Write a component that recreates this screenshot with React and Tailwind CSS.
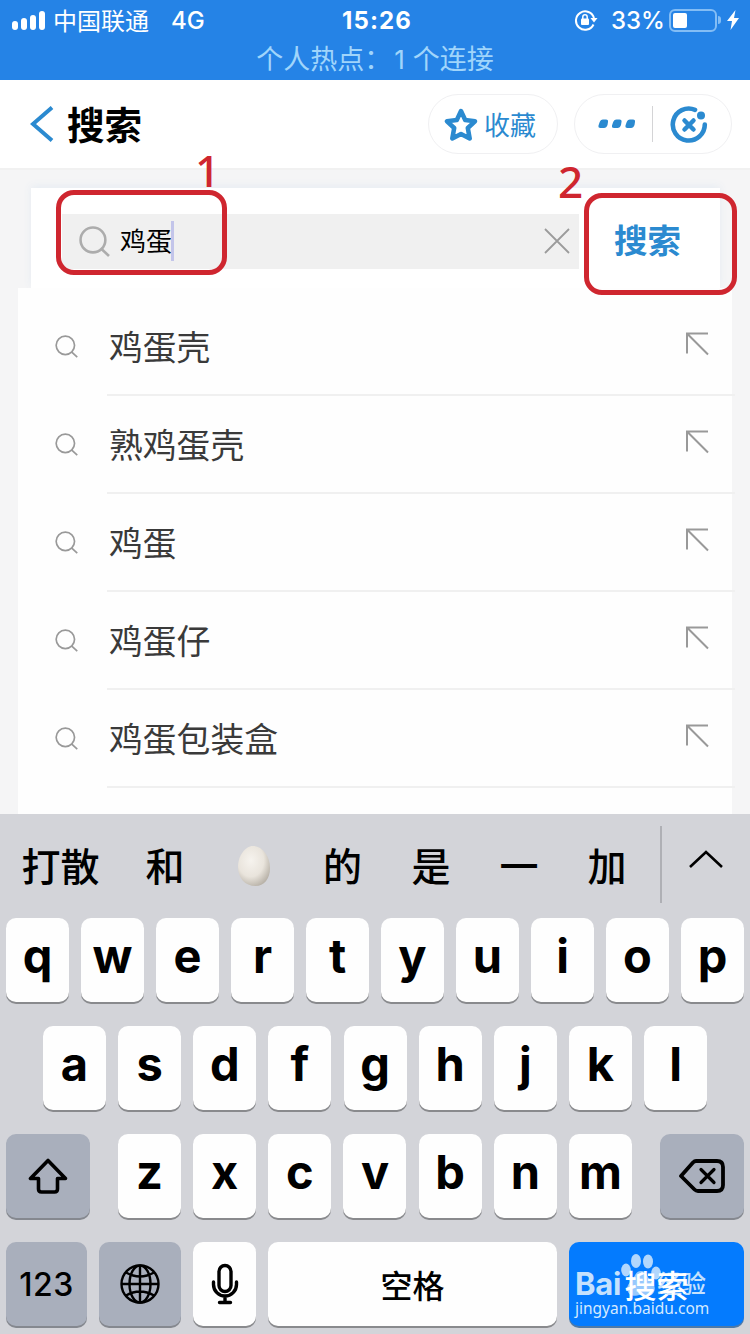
import clsx from 'clsx'

const suggestions = ['鸡蛋壳', '熟鸡蛋壳', '鸡蛋', '鸡蛋仔', '鸡蛋包装盒']
const topRow = ['q', 'w', 'e', 'r', 't', 'y', 'u', 'i', 'o', 'p']
const middleRow = ['a', 's', 'd', 'f', 'g', 'h', 'j', 'k', 'l']
const bottomRow = ['z', 'x', 'c', 'v', 'b', 'n', 'm']

function SearchIcon({ className, strokeWidth }) {
  return (
    <svg viewBox="0 0 30 30" className={className} fill="none" stroke="currentColor" strokeWidth={strokeWidth}>
      <circle cx="13.500" cy="13.500" r="12" />
      <path d="M21.500 22 29 29" />
    </svg>
  )
}

function EggIcon() {
  return (
    <svg viewBox="0 0 34 42" className="w-[34px] h-[42px]">
      <defs>
        <radialGradient id="egg" cx="0.4" cy="0.36" r="0.68">
          <stop offset="0" stopColor="#f6f3ee" />
          <stop offset="0.6" stopColor="#e9e4dc" />
          <stop offset="1" stopColor="#b9b3a9" />
        </radialGradient>
      </defs>
      <path d="M16 1C25 1 33 11 33 23 33 34 27 41 18.500 41 8 41 1 33 1 22 1 11 8 1 16 1z" fill="url(#egg)" />
    </svg>
  )
}

function Key({ children, className, tone = 'light' }) {
  return (
    <div
      className={clsx(
        'h-[84px] rounded-[10px] flex items-center justify-center shrink-0 text-black',
        tone === 'light' && 'bg-[#fefefe] shadow-[0_2px_0_#898a8d]',
        tone === 'dark' && 'bg-[#a9afbc] shadow-[0_2px_0_#85888f]',
        tone === 'blue' && 'bg-[#047bfe] shadow-[0_2px_0_#4d79a8]',
        className
      )}
    >
      {children}
    </div>
  )
}

function LetterKey({ letter }) {
  return (
    <Key className="w-[63px]">
      <span className="font-['Inter',sans-serif] font-bold text-[47px] leading-[60px] mb-[9px]">{letter}</span>
    </Key>
  )
}

function StatusBar() {
  return (
    <header className="h-20 bg-[#2583e6] text-white">
      <div className="h-10 pl-3 pr-2 flex items-center">
        <div className="flex items-end gap-[3px] h-5 w-[33px] shrink-0">
          <i className="w-1.5 h-[9px] rounded-sm bg-white" />
          <i className="w-1.5 h-3 rounded-sm bg-white" />
          <i className="w-1.5 h-[15px] rounded-sm bg-white" />
          <i className="w-1.5 h-[19px] rounded-sm bg-white" />
        </div>
        <span className="ml-2 w-[118px] text-[24px] leading-10">中国联通</span>
        <span className="w-[171px] font-['Inter',sans-serif] text-[24px] font-medium mt-0.5">4G</span>
        <span className="font-['Inter',sans-serif] text-[24px] font-bold w-[232px] tracking-[1.1px] mt-0.5">15:26</span>
        <svg viewBox="0 0 24 22" className="w-6 h-[22px] shrink-0" fill="none" stroke="currentColor" strokeWidth="2">
          <path d="M19.500 15.500A9.200 9.200 0 1 1 20 9" />
          <path d="M16.500 9h7l-3.500 4.500z" fill="currentColor" stroke="none" />
          <rect x="7" y="9.500" width="8" height="6.500" rx="1" fill="currentColor" stroke="none" />
          <path d="M8.800 10V8a2.200 2.200 0 0 1 4.400 0v2" strokeWidth="1.500" />
        </svg>
        <span className="ml-[13px] w-[58px] shrink-0 font-['Inter',sans-serif] text-[24px] font-medium mt-0.5">33%</span>
        <div className="w-12 h-[23px] border-2 border-[#83bdf5] rounded-[6px] p-0.5 shrink-0">
          <div className="w-[14px] h-[15px] bg-white rounded-xs" />
        </div>
        <div className="w-[3px] h-2 ml-px rounded-r-sm bg-[#83bdf5] shrink-0" />
        <svg viewBox="0 0 12 20" className="w-3 h-5 ml-[6px] shrink-0" fill="currentColor">
          <path d="M8.500 0 0 11h5L3.500 20 12 8H7z" />
        </svg>
      </div>
      <p className="h-10 text-center text-[27px] leading-[36px] text-[#a0d5fb]">
        <span>个人热点：</span>
        <span className="font-['Inter',sans-serif] text-[26px] ml-[3px] mr-[2px]">1</span> 个连接
      </p>
    </header>
  )
}

function NavBar() {
  return (
    <nav className="h-[90px] bg-white border-b-2 border-[#f1f1f1] flex items-center pl-[30px] pr-[18px] text-[#2b8ad0]">
      <svg viewBox="0 0 24 36" className="w-6 h-9" fill="none" stroke="currentColor" strokeWidth="4">
        <path d="M22 1.500 3 18l19 16.500" />
      </svg>
      <h1 className="ml-[13px] mb-[3px] text-[37.500px] leading-[50px] font-bold text-black">搜索</h1>
      <button className="ml-auto w-[130px] h-[60px] rounded-full border border-[#f0f0f2] flex items-center pl-[15px]">
        <svg viewBox="0 0 34 34" className="w-[34px] h-[34px] mt-[2px]" fill="none" stroke="currentColor" strokeWidth="4.500" strokeLinejoin="round">
          <path d="m17 3 4.200 9 9.800 1.300-7.200 6.700 1.900 10.500L17 26 8.300 30.500l1.900-10.500L3 13.300l9.800-1.300z" />
        </svg>
        <span className="ml-[6px] text-[26px] leading-8">收藏</span>
      </button>
      <div className="ml-4 w-[158px] h-[60px] rounded-full border border-[#f0f0f2] flex items-center">
        <svg viewBox="0 0 38 10" className="ml-[23px] w-[38px] h-[10px]" fill="currentColor">
          <path d="M5 .500h3q2.500 0 2 2.500L9.500 6Q8.500 9 6 9H2.500Q0 9 .500 6.500L1.500 3.500Q2.500.500 5 .500zM18.500 .500h3q2.500 0 2 2.500L23 6q-1 3-3.500 3H16q-2.500 0-2-2.500l1-3q1-3 3.500-3zM32 .500h3q2.500 0 2 2.500l-.500 3q-1 3-3.500 3h-3.500q-2.500 0-2-2.500l1-3q1-3 3.500-3z" />
        </svg>
        <div className="ml-[16px] w-px h-9 bg-[#d4d4d6]" />
        <svg viewBox="0 0 38 38" className="ml-[17px] w-[38px] h-[38px] mt-[2px]" fill="none" stroke="currentColor">
          <path d="M25 3.800A16 16 0 1 0 34.800 18.500" strokeWidth="4.600" strokeLinecap="round" />
          <circle cx="31" cy="9.500" r="4" fill="currentColor" stroke="none" />
          <path d="m14.500 14.500 9 9M23.500 14.500l-9 9" strokeWidth="4.500" strokeLinecap="round" />
        </svg>
      </div>
    </nav>
  )
}

function SearchBar() {
  return (
    <div className="ml-[31px] w-[689px] h-[100px] bg-white shadow-[0_-2px_8px_#e6ecf2] pl-[31px] pt-[26px] flex items-start">
      <div className="w-[517px] h-[55px] bg-[#f0f0f0] flex items-center pl-[17px] pr-[9px]">
        <SearchIcon className="w-[31px] h-[31px] text-[#acacac]" strokeWidth="2.500" />
        <span className="ml-[10px] mb-[3px] text-[26px] leading-10 text-black">鸡蛋</span>
        <i className="-ml-px mb-[2px] w-[3px] h-10 bg-[#c3c5ea]" />
        <svg viewBox="0 0 26 26" className="ml-auto mb-px w-[26px] h-[26px] text-[#9b9b9b]" fill="none" stroke="currentColor" strokeWidth="1.800">
          <path d="m1 1 24 24M25 1 1 25" />
        </svg>
      </div>
      <button className="ml-[35px] -mt-[2px] text-[33.500px] leading-[54px] font-bold text-[#2b8ad0]">搜索</button>
    </div>
  )
}

function Suggestion({ text }) {
  return (
    <li className="h-[98px] shrink-0 flex items-center pl-[37px]">
      <SearchIcon className="w-[23px] h-[23px] shrink-0 text-[#999] mb-[2px]" strokeWidth="2.200" />
      <div className="ml-[29px] w-[628px] h-[98px] border-b-2 border-[#f0f0f0] flex items-center justify-between pr-[26px] shrink-0">
        <span className="ml-[2px] text-[33.800px] leading-[50px] text-[#3a3a3a]">{text}</span>
        <svg viewBox="0 0 24 24" className="w-6 h-6 mb-[4px] text-[#999]" fill="none" stroke="currentColor" strokeWidth="2">
          <path d="M23 1.500H2v20M2 1.500l21 21" />
        </svg>
      </div>
    </li>
  )
}

function Candidates() {
  return (
    <div className="h-[104px] flex items-center text-[39px] leading-[56px] font-medium text-black">
      <span className="mb-[5px] w-[121px] text-center">打散</span>
      <span className="mb-[5px] w-[88px] text-center">和</span>
      <span className="w-[89px] flex justify-center"><EggIcon /></span>
      <span className="mb-[5px] w-[89px] text-center">的</span>
      <span className="mb-[5px] w-[88px] text-center">是</span>
      <span className="mb-[5px] w-[88px] text-center">一</span>
      <span className="mb-[5px] w-[88px] text-center">加</span>
      <div className="ml-[9px] w-0.5 h-[77px] mb-[4px] bg-[#afb0b5]" />
      <svg viewBox="0 0 34 18" className="ml-[27px] mb-[14px] w-[34px] h-[18px]" fill="none" stroke="currentColor" strokeWidth="2.600">
        <path d="M1 17 17 2l16 15" />
      </svg>
    </div>
  )
}

function Watermark() {
  return (
    <div className="absolute left-[6px] top-[10px] w-[140px] text-[#c5e1fd]">
      <div className="flex items-center h-[47px] pt-[16px]">
        <span className="font-['Inter',sans-serif] text-[31px] font-bold leading-[34px] tracking-[-0.3px]">Bai</span>
        <span className="ml-[36px] text-[25px] leading-[34px] tracking-[-1px] font-medium mb-[3px]">经验</span>
      </div>
      <div className="font-['Noto_Sans',sans-serif] text-[15.500px] leading-5 -mt-px text-[#d5eaff]">jingyan.baidu.com</div>
      <svg viewBox="0 0 40 44" className="absolute left-[46px] top-[1px] w-10 h-11 opacity-90" fill="currentColor">
        <ellipse cx="5" cy="17" rx="4.800" ry="6.500" />
        <ellipse cx="15" cy="8" rx="5" ry="7" />
        <ellipse cx="27" cy="8.500" rx="5" ry="7" />
        <ellipse cx="35" cy="20" rx="4.800" ry="6.500" />
        <path d="M20 18c5 0 6 5 9 9 4 4 6 7 4 12-3 6-8 3-13 3s-10 3-13-3c-2-5 0-8 4-12 3-4 4-9 9-9z" opacity="0.850" />
      </svg>
    </div>
  )
}

function Keyboard() {
  return (
    <section className="h-[520px] bg-[#d3d4d9]">
      <Candidates />
      <div className="flex flex-col gap-6 px-1.5">
        <div className="flex justify-between">
          {topRow.map(letter => <LetterKey key={letter} letter={letter} />)}
        </div>
        <div className="flex justify-between px-[37px]">
          {middleRow.map(letter => <LetterKey key={letter} letter={letter} />)}
        </div>
        <div className="flex justify-between">
          <Key tone="dark" className="w-[84px]">
            <svg viewBox="0 0 40 36" className="w-10 h-9" fill="none" stroke="currentColor" strokeWidth="3.600" strokeLinejoin="round">
              <path d="M20 2.500 2.500 20.500h8V31q0 3 3 3h13q3 0 3-3V20.500h8z" />
            </svg>
          </Key>
          <div className="flex justify-between w-[514px]">
            {bottomRow.map(letter => <LetterKey key={letter} letter={letter} />)}
          </div>
          <Key tone="dark" className="w-[84px]">
            <svg viewBox="0 0 46 36" className="w-[46px] h-9" fill="none" stroke="currentColor" strokeWidth="3.800" strokeLinecap="round" strokeLinejoin="round">
              <path d="M17 3h21q6 0 6 6v18q0 6-6 6H19q-2 0-3.500-1.500L2 18 14 4.500Q15.500 3 17 3z" />
              <path d="m22 11.500 13 13M35 11.500l-13 13" strokeWidth="3.200" />
            </svg>
          </Key>
        </div>
        <div className="flex gap-3">
          <Key tone="dark" className="w-[81px]">
            <span className="font-['Inter',sans-serif] text-[32px] font-medium tracking-[0.5px] mt-[2px]">123</span>
          </Key>
          <Key tone="dark" className="w-[82px]">
            <svg viewBox="0 0 40 40" className="w-10 h-10" fill="none" stroke="currentColor" strokeWidth="2.400">
              <circle cx="20" cy="20" r="18.500" />
              <ellipse cx="20" cy="20" rx="10.500" ry="18.500" />
              <path d="M20 1.500v37M1.500 20h37M6 8.500q14 8 28 0M6 31.500q14-8 28 0" />
            </svg>
          </Key>
          <Key className="w-[63px]">
            <svg viewBox="0 0 28 42" className="w-7 h-[42px]" fill="none" stroke="currentColor" strokeWidth="3.400" strokeLinecap="round">
              <rect x="8" y="2.500" width="12" height="26" rx="6" />
              <path d="M2.500 19v2.500a11.500 11.500 0 0 0 23 0V19M14 33v6M8.500 39.500h11" />
            </svg>
          </Key>
          <Key className="w-[289px]">
            <span className="text-[32px] font-medium">空格</span>
          </Key>
          <Key tone="blue" className="w-[175px] relative">
            <Watermark />
            <span className="relative text-[32px] font-medium text-white">搜索</span>
          </Key>
        </div>
      </div>
    </section>
  )
}

export default function App() {
  return (
    <div className="relative w-[750px] h-[1334px] overflow-hidden bg-[#f5f5f6] font-['Noto_Sans_CJK_SC',sans-serif]">
      <StatusBar />
      <NavBar />
      <main className="h-[644px] pt-[18px] overflow-hidden">
        <SearchBar />
        <ul className="relative ml-[18px] w-[714px] h-[526px] bg-[#fefefe] pt-[10px]">
          {suggestions.map(text => <Suggestion key={text} text={text} />)}
        </ul>
      </main>
      <Keyboard />

      {/* step markers */}
      <div className="absolute left-[56px] top-[190px] w-[171px] h-[85px] border-[5px] border-[#cf262f] rounded-[18px]" />
      <span className="absolute left-[195px] top-[147px] font-['Noto_Sans',sans-serif] text-[44px] leading-[46px] font-medium text-[#cf262f]">1</span>
      <div className="absolute left-[584px] top-[193px] w-[153px] h-[102px] border-[5px] border-[#cf262f] rounded-[18px]" />
      <span className="absolute left-[558px] top-[158px] font-['Noto_Sans',sans-serif] text-[44px] leading-[46px] font-medium text-[#cf262f]">2</span>
    </div>
  )
}
